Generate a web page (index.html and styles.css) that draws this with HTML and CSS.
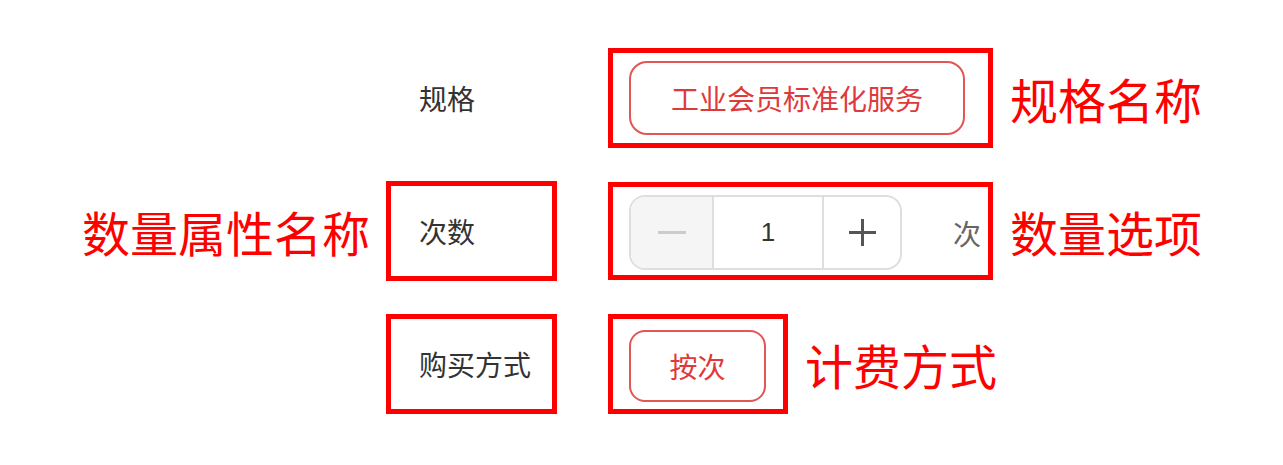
FILE: index.html
```html
<!DOCTYPE html>
<html lang="zh-CN">
<head>
<meta charset="utf-8">
<title>规格选择</title>
<link rel="stylesheet" href="styles.css">
</head>
<body>
<div class="form">
  <div class="row">
    <div class="note-left"></div>
    <div class="label plain">规格</div>
    <div class="opt">
      <div class="mark opt-box wide">
        <span class="chip spec">工业会员标准化服务</span>
      </div>
      <span class="note">规格名称</span>
    </div>
  </div>

  <div class="row">
    <div class="note-left"><span class="note">数量属性名称</span></div>
    <div class="label mark">次数</div>
    <div class="opt">
      <div class="mark opt-box wide qty-box">
        <div class="stepper">
          <span class="step minus"><i class="bar-h"></i></span>
          <span class="step value">1</span>
          <span class="step plus"><i class="bar-h"></i><i class="bar-v"></i></span>
        </div>
        <span class="unit">次</span>
      </div>
      <span class="note">数量选项</span>
    </div>
  </div>

  <div class="row">
    <div class="note-left"></div>
    <div class="label mark">购买方式</div>
    <div class="opt">
      <div class="mark opt-box narrow">
        <span class="chip pay">按次</span>
      </div>
      <span class="note">计费方式</span>
    </div>
  </div>
</div>
</body>
</html>
```

FILE: styles.css
```css
html, body {
  margin: 0;
  padding: 0;
  background: #ffffff;
}

body {
  font-family: "Noto Sans CJK SC", "Noto Sans", sans-serif;
  color: #333333;
}

.form {
  display: flex;
  flex-direction: column;
  row-gap: 33px;
  padding-top: 48px;
}

.row {
  display: flex;
  align-items: center;
  height: 100px;
}

.note-left {
  width: 386px;
  display: flex;
  justify-content: flex-end;
  padding-right: 16px;
  box-sizing: border-box;
}

.mark {
  border: 5px solid #ff0000;
  box-sizing: border-box;
}

.label {
  width: 171px;
  height: 100px;
  display: flex;
  align-items: center;
  padding-left: 28px;
  box-sizing: border-box;
  font-size: 28px;
  line-height: 1;
  color: #333333;
}

.label.plain {
  border: 5px solid transparent;
}

.opt {
  display: flex;
  align-items: center;
  margin-left: 51px;
}

.opt-box {
  display: flex;
  align-items: center;
  height: 100px;
  padding-left: 16px;
}

.opt-box.wide {
  width: 385px;
}

.qty-box {
  height: 98px;
  padding-top: 3px;
}

.opt-box.narrow {
  width: 180px;
  padding-top: 3px;
}

.chip {
  display: flex;
  align-items: center;
  justify-content: center;
  box-sizing: border-box;
  border: 2px solid #e25656;
  border-radius: 18px;
  color: #e0393c;
  font-size: 28px;
  line-height: 1;
}

.chip.spec {
  width: 336px;
  height: 74px;
}

.chip.pay {
  width: 137px;
  height: 72px;
  border-radius: 16px;
}

.stepper {
  display: flex;
  width: 273px;
  height: 75px;
  border: 2px solid #dedede;
  border-radius: 16px;
  box-sizing: border-box;
  overflow: hidden;
}

.step {
  position: relative;
  display: flex;
  align-items: center;
  justify-content: center;
  height: 100%;
}

.step.minus {
  width: 81px;
  background: #f5f5f5;
  border-right: 2px solid #dedede;
}

.step.value {
  width: 108px;
  border-right: 2px solid #dedede;
  font-family: "Liberation Sans", "Noto Sans", sans-serif;
  font-size: 26px;
  color: #333333;
}

.step.plus {
  flex: 1;
}

.bar-h {
  display: block;
  width: 28px;
  height: 3px;
  background: #cccccc;
}

.plus .bar-h {
  width: 27px;
  background: #555555;
}

.bar-v {
  position: absolute;
  left: 50%;
  top: 50%;
  width: 3px;
  height: 27px;
  margin-left: -1.5px;
  margin-top: -13.5px;
  background: #555555;
}

.unit {
  margin-left: 51px;
  font-size: 28px;
  line-height: 1;
  color: #666666;
}

.note {
  font-size: 48px;
  line-height: 1;
  color: #ff0000;
  margin-left: 17px;
  white-space: nowrap;
}

.note-left .note {
  margin-left: 0;
}
```
